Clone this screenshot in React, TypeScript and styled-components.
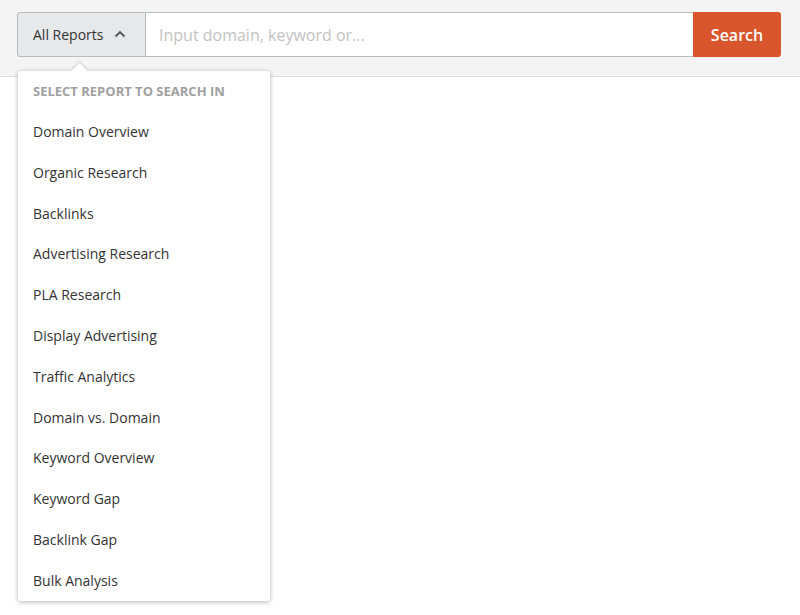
import styled, { createGlobalStyle } from "styled-components";

const Global = createGlobalStyle`
  body { margin: 0; background: #fff; font-family: "Open Sans", "Liberation Sans", sans-serif; }
`;

const items = [
  "Domain Overview",
  "Organic Research",
  "Backlinks",
  "Advertising Research",
  "PLA Research",
  "Display Advertising",
  "Traffic Analytics",
  "Domain vs. Domain",
  "Keyword Overview",
  "Keyword Gap",
  "Backlink Gap",
  "Bulk Analysis",
];

export default function App() {
  return (
    <Page>
      <Global />
      <TopBar>
        <SearchGroup>
          <ReportButton>
            All Reports
            <svg width="12" height="8" viewBox="0 0 12 8">
              <path d="M1.5 6.5 L6 2 L10.5 6.5" fill="none" stroke="#555" strokeWidth="1.8" />
            </svg>
            <Menu>
              <MenuTitle>SELECT REPORT TO SEARCH IN</MenuTitle>
              {items.map((i) => (
                <MenuItem key={i}>{i}</MenuItem>
              ))}
            </Menu>
          </ReportButton>
          <Input placeholder="Input domain, keyword or..." />
          <SearchButton>Search</SearchButton>
        </SearchGroup>
      </TopBar>
    </Page>
  );
}

const Page = styled.div`
  width: 800px;
  height: 615px;
  background: #fff;
`;

const TopBar = styled.div`
  height: 77px;
  box-sizing: border-box;
  padding: 12px 19px 0 17px;
  background: #f4f4f4;
  border-bottom: 1px solid #dcdcdc;
`;

const SearchGroup = styled.div`
  display: flex;
  height: 45px;
`;

const ReportButton = styled.div`
  position: relative;
  width: 128px;
  box-sizing: border-box;
  display: flex;
  align-items: center;
  gap: 11px;
  padding-left: 15px;
  background: #e6e8ea;
  border: 1px solid #b9bcbf;
  border-right: none;
  border-radius: 3px 0 0 3px;
  font-size: 14px;
  color: #333;
  svg { margin-top: -2px; }
`;

const Menu = styled.div`
  position: absolute;
  top: 58px;
  left: 0;
  width: 252px;
  height: 530px;
  box-sizing: border-box;
  background: #fff;
  border-radius: 3px;
  box-shadow: 0 1px 5px rgba(0, 0, 0, 0.3);
  padding: 9px 0 0;
  z-index: 2;
  &::before {
    content: "";
    position: absolute;
    top: -6px;
    left: 56px;
    width: 11px;
    height: 11px;
    background: #fff;
    transform: rotate(45deg);
    box-shadow: -1px -1px 2px rgba(0, 0, 0, 0.15);
  }
`;

const MenuTitle = styled.div`
  height: 41px;
  line-height: 22px;
  padding-left: 15px;
  font-size: 13px;
  font-weight: 700;
  color: #a0a0a0;
`;

const MenuItem = styled.div`
  height: 40.8px;
  line-height: 22px;
  padding-left: 15px;
  font-size: 14px;
  color: #333;
`;

const Input = styled.input`
  flex: 1;
  min-width: 0;
  border: 1px solid #b9bcbf;
  border-right: none;
  outline: none;
  padding: 0 13px;
  font-family: inherit;
  font-size: 16px;
  color: #333;
  &::placeholder { color: #c2c2c2; }
`;

const SearchButton = styled.button`
  width: 88px;
  border: none;
  border-radius: 0 3px 3px 0;
  background: #d9552b;
  color: #fff;
  font-family: inherit;
  font-size: 16px;
  font-weight: 600;
`;
